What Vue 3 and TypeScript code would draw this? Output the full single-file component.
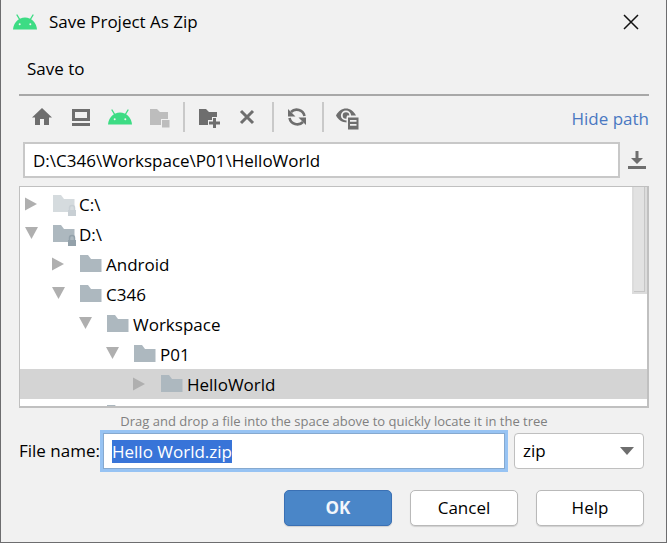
<script setup lang="ts">
import { onMounted, ref } from 'vue'

interface TreeNode {
  name: string
  level: number
  open: boolean
  kind: 'folder' | 'drive'
  dim?: boolean
}

const nodes: TreeNode[] = [
  { name: 'C:\\', level: 0, open: false, kind: 'drive', dim: true },
  { name: 'D:\\', level: 0, open: true, kind: 'drive' },
  { name: 'Android', level: 1, open: false, kind: 'folder' },
  { name: 'C346', level: 1, open: true, kind: 'folder' },
  { name: 'Workspace', level: 2, open: true, kind: 'folder' },
  { name: 'P01', level: 3, open: true, kind: 'folder' },
  { name: 'HelloWorld', level: 4, open: false, kind: 'folder' },
]

const selected = ref('HelloWorld')
const path = ref('D:\\C346\\Workspace\\P01\\HelloWorld')
const fileName = ref('Hello World.zip')
const extension = ref('zip')
const showPath = ref(true)
const nameInput = ref<HTMLInputElement | null>(null)

onMounted(() => {
  nameInput.value?.focus()
  nameInput.value?.select()
})
</script>

<template>
  <main class="dialog">
    <header class="titlebar">
      <svg class="droid" viewBox="0 0 24 16" aria-hidden="true">
        <path d="M4 1l3 5M20 1l-3 5" stroke="#3ddc84" stroke-width="1.4" stroke-linecap="round" />
        <path d="M0 15.500C.5 8.500 5.500 3.500 12 3.500S23.500 8.500 24 15.500z" fill="#3ddc84" />
        <circle cx="6.700" cy="10.300" r="1" fill="#f1f1f1" />
        <circle cx="17.300" cy="10.300" r="1" fill="#f1f1f1" />
      </svg>
      <h1>Save Project As Zip</h1>
      <button class="close" type="button" aria-label="Close">
        <svg viewBox="0 0 16 16"><path d="M1 1l14 14M15 1L1 15" stroke="#111" stroke-width="1.500" /></svg>
      </button>
    </header>

    <p class="subtitle">Save to</p>

    <section class="body">
      <div class="toolbar">
        <button type="button" aria-label="Home">
          <svg viewBox="0 0 24 24"><path d="M12 3l10 9.500h-3V20h-5v-6h-4v6H5v-7.500H2z" fill="#6e6e6e" /></svg>
        </button>
        <button type="button" aria-label="Desktop">
          <svg viewBox="0 0 24 24"><path d="M3 4h18v12H3zM6 7v6h12V7zM3 18h18v3H3z" fill="#6e6e6e" fill-rule="evenodd" /></svg>
        </button>
        <button type="button" aria-label="Project directory">
          <svg viewBox="0 0 24 24">
            <path d="M4 5l3 5M20 5l-3 5" stroke="#3ddc84" stroke-width="1.400" stroke-linecap="round" />
            <path d="M0 19.500C.5 12.500 5.500 7.500 12 7.500S23.500 12.500 24 19.500z" fill="#3ddc84" />
            <circle cx="6.700" cy="14.300" r="1" fill="#f1f1f1" />
            <circle cx="17.300" cy="14.300" r="1" fill="#f1f1f1" />
          </svg>
        </button>
        <button type="button" aria-label="Module directory" disabled>
          <svg viewBox="0 0 24 24">
            <path d="M3 4h7l3 3h8v7h-7v6H3z" fill="#bdbdbd" />
            <path d="M15 15h7.500v7.500H15z" fill="#bdbdbd" />
          </svg>
        </button>
        <i class="separator"></i>
        <button type="button" aria-label="New folder">
          <svg viewBox="0 0 24 24">
            <path d="M2 4h7l3 3h8v5h-5v3h-4v5H2z" fill="#6e6e6e" />
            <path d="M16 13h3v3.500h4v3h-4V23h-3v-3.500h-4v-3h4z" fill="#6e6e6e" />
          </svg>
        </button>
        <button type="button" aria-label="Delete">
          <svg viewBox="0 0 24 24"><path d="M5 6l12 12M17 6L5 18" stroke="#6e6e6e" stroke-width="3" /></svg>
        </button>
        <i class="separator"></i>
        <button type="button" aria-label="Refresh">
          <svg viewBox="0 0 24 24">
            <path d="M5 7A8 8 0 0 1 18.500 11M17 17A8 8 0 0 1 3.500 13" fill="none" stroke="#6e6e6e" stroke-width="2.600" />
            <path d="M2 4v7.500h7.500zM20 20v-7.500h-7.500z" fill="#6e6e6e" />
          </svg>
        </button>
        <i class="separator"></i>
        <button type="button" aria-label="Show hidden files">
          <svg viewBox="0 0 24 24">
            <path d="M0 10.500C2.500 5.700 6 3.500 10 3.500s7.500 2.200 10 7H11v7C6 17.300 2.500 15.300 0 10.500z" fill="#6e6e6e" />
            <circle cx="10" cy="10.500" r="4.200" fill="none" stroke="#f1f1f1" stroke-width="1.800" />
            <path d="M10.500 11.500H23V24H10.500z" fill="#f1f1f1" />
            <path d="M12 12.500h10.500v12H12zM14 15v1.700h6.500V15zM14 19v1.700h6.500V19z" fill="#6e6e6e" fill-rule="evenodd" />
          </svg>
        </button>
        <a class="hide-path" href="#" @click.prevent="showPath = !showPath">Hide path</a>
      </div>

      <div v-if="showPath" class="path-row">
        <input v-model="path" class="path" type="text" aria-label="Path" spellcheck="false" />
        <button type="button" aria-label="Recent paths">
          <svg viewBox="0 0 24 24"><path d="M10.500 3h3v7h4.500l-6 6-6-6h4.500zM3 18h18v3H3z" fill="#6e6e6e" /></svg>
        </button>
      </div>

      <div class="tree">
        <ul class="nodes" role="tree">
          <li
            v-for="node in nodes"
            :key="node.name"
            role="treeitem"
            :class="['node', 'level-' + node.level, { selected: node.name === selected }]"
            @click="selected = node.name"
          >
            <svg class="arrow" viewBox="0 0 14 14" aria-hidden="true">
              <path v-if="node.open" d="M0 0h13L6.500 12z" fill="#afafaf" />
              <path v-else d="M0 0.500l12 6.500-12 6.500z" fill="#afafaf" />
            </svg>
            <svg class="folder" :class="{ dim: node.dim }" viewBox="0 0 24 22" aria-hidden="true">
              <path d="M0 0h8l3 4h10.500v13H0z" fill="#adb8bf" />
              <template v-if="node.kind === 'drive'">
                <path d="M16.500 15v-2a2.500 2.500 0 0 1 5 0v2" fill="none" stroke="#93a1aa" stroke-width="1.500" />
                <path d="M15 15h8v6h-8z" fill="#93a1aa" />
              </template>
            </svg>
            <span>{{ node.name }}</span>
          </li>
          <li class="node level-2 next" aria-hidden="true">
            <i class="arrow"></i>
            <svg class="folder" viewBox="0 0 24 22"><path d="M0 0h8l3 4h10.500v13H0z" fill="#adb8bf" /></svg>
          </li>
        </ul>
        <div class="thumb"></div>
      </div>

      <p class="hint">Drag and drop a file into the space above to quickly locate it in the tree</p>
    </section>

    <form class="file-row" @submit.prevent>
      <label for="file-name">File name:</label>
      <input id="file-name" ref="nameInput" v-model="fileName" type="text" spellcheck="false" autocomplete="off" />
      <div class="combo">
        <select v-model="extension" aria-label="File extension">
          <option>zip</option>
        </select>
        <svg viewBox="0 0 14 8" aria-hidden="true"><path d="M0 0h14L7 8z" fill="#6e6e6e" /></svg>
      </div>
    </form>

    <footer class="actions">
      <button class="primary" type="button">OK</button>
      <button type="button">Cancel</button>
      <button type="button">Help</button>
    </footer>
  </main>
</template>

<style>
html,
body {
  margin: 0;
  background: #6d6d6f;
}
</style>

<style scoped>
.dialog,
.dialog * {
  box-sizing: border-box;
}

.dialog {
  display: flex;
  flex-direction: column;
  min-height: 100vh;
  padding: 0 17px 14px 18px;
  border: solid #6d6d6f;
  border-width: 0 1px 1px;
  background: #f1f1f1;
  color: #000;
  font: 17px/24px "Segoe UI", "Open Sans", "Noto Sans", sans-serif;
}

button,
input,
select {
  font: inherit;
  color: inherit;
}

button {
  cursor: pointer;
}

svg {
  display: block;
}

h1,
p,
ul {
  margin: 0;
  padding: 0;
  font-size: inherit;
  font-weight: 400;
}

.titlebar {
  display: flex;
  align-items: center;
  gap: 12px;
  height: 44px;
  margin-left: -6px;
}

.droid {
  width: 24px;
  height: 16px;
}

.close {
  margin-left: auto;
  padding: 10px;
  border: 0;
  background: none;
}

.close svg {
  width: 16px;
  height: 16px;
}

.subtitle {
  height: 52px;
  padding: 13px 8px;
  border-bottom: 2px solid #a8a8a8;
}

.toolbar {
  display: flex;
  align-items: center;
  gap: 15px;
  height: 42px;
  padding-left: 11px;
}

.toolbar button,
.path-row button {
  flex: none;
  width: 24px;
  height: 24px;
  padding: 0;
  border: 0;
  background: none;
}

.toolbar svg,
.path-row svg {
  width: 24px;
  height: 24px;
  overflow: visible;
}

.separator {
  width: 2px;
  height: 30px;
  margin: 0 -3px;
  background: #c9c9c9;
}

.hide-path {
  margin-left: auto;
  padding-top: 4px;
  color: #4a78c2;
  text-decoration: none;
}

.path-row {
  display: flex;
  align-items: center;
  gap: 5px;
  margin-top: 4px;
  padding-left: 4px;
}

.path {
  flex: 1;
  min-width: 0;
  height: 36px;
  padding: 0 8px;
  border: 2px solid #c8c8c8;
  background: #fff;
  outline: 0;
}

.tree {
  display: grid;
  height: 222px;
  margin-top: 8px;
  border: solid #c0c0c0;
  border-width: 1px 2px 2px 1px;
  background: #fff;
  overflow: hidden;
}

.nodes {
  grid-area: 1 / 1;
  padding-top: 2px;
  list-style: none;
}

.node {
  display: flex;
  align-items: center;
  height: 30px;
  padding-left: 5px;
}

.node span {
  padding-top: 2px;
}

.level-1 {
  padding-left: 32px;
}

.level-2 {
  padding-left: 59px;
}

.level-3 {
  padding-left: 86px;
}

.level-4 {
  padding-left: 113px;
}

.selected {
  background: #d4d4d4;
}

.arrow {
  width: 14px;
  height: 14px;
  margin-right: 14px;
}

.folder {
  width: 24px;
  height: 22px;
  margin: 3px 2px 0 0;
}

.dim {
  opacity: 0.5;
}

.thumb {
  grid-area: 1 / 1;
  justify-self: end;
  width: 15px;
  height: 107px;
  border: 2px solid #dcdcdc;
  border-top: 0;
  background: #e2e2e2;
  box-shadow: inset -1px -1px #c6c6c6;
}

.hint {
  height: 25px;
  padding-top: 1px;
  color: #808080;
  font-size: 13px;
  text-align: center;
}

.file-row {
  display: flex;
  align-items: center;
  gap: 6px;
  padding-right: 5px;
}

.file-row label {
  flex: none;
  width: 78px;
  white-space: nowrap;
}

.file-row input {
  flex: 1;
  min-width: 0;
  height: 36px;
  padding: 0 8px;
  border: 1px solid #86a9cf;
  outline: 3px solid #97c3f3;
  background: #fff;
}

.file-row input::selection {
  background: #3874d8;
  color: #fff;
}

.combo {
  display: grid;
  align-items: center;
  width: 130px;
  margin-left: 3px;
}

.combo select {
  grid-area: 1 / 1;
  width: 100%;
  height: 36px;
  padding: 0 8px;
  border: 1px solid #bfbfbf;
  border-radius: 4px;
  background: #fff;
  appearance: none;
}

.combo svg {
  grid-area: 1 / 1;
  justify-self: end;
  width: 14px;
  height: 8px;
  margin-right: 10px;
  pointer-events: none;
}

.actions {
  display: flex;
  justify-content: flex-end;
  gap: 18px;
  margin-top: 21px;
  padding-right: 5px;
}

.actions button {
  width: 108px;
  height: 36px;
  padding: 0;
  border: 1px solid #b9b9b9;
  border-radius: 5px;
  background: #fff;
  box-shadow: 0 1px 1px #d0d0d0;
}

.actions .primary {
  border-color: #3a70b4;
  background: #4a86c8;
  color: #f2f6fb;
  font-weight: 700;
}
</style>
